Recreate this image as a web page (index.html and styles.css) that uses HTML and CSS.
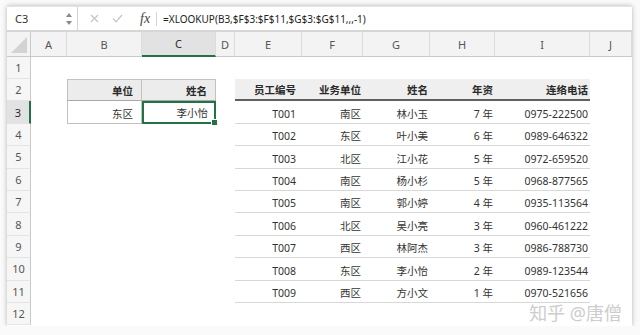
FILE: index.html
```html
<!DOCTYPE html>
<html lang="zh-CN">
<head>
    <meta charset="UTF-8">
    <meta name="viewport" content="width=device-width, initial-scale=1.0">
    <title>XLOOKUP</title>
    <link rel="stylesheet" href="styles.css">
</head>
<body>

    <div class="window">
        <!-- Formula bar -->
        <div class="formula-bar">
            <div class="name-box">
                <span>C3</span>
                <svg class="spinner" width="6" height="14" viewBox="0 0 6 14">
                    <polygon points="3,1 6,5 0,5" fill="#8a8a8a"/>
                    <polygon points="0,9 6,9 3,13" fill="#8a8a8a"/>
                </svg>
            </div>
            <svg class="icon-cancel" width="9" height="9" viewBox="0 0 9 9">
                <path d="M1 1 L8 8 M8 1 L1 8" stroke="#c4c4c4" stroke-width="1.2" fill="none"/>
            </svg>
            <svg class="icon-enter" width="11" height="9" viewBox="0 0 11 9">
                <path d="M1 4.5 L4 7.8 L10 1" stroke="#c4c4c4" stroke-width="1.2" fill="none"/>
            </svg>
            <span class="fx">fx</span>
            <span class="bar-sep"></span>
            <div class="formula">=XLOOKUP(B3,$F$3:$F$11,$G$3:$G$11,,,-1)</div>
        </div>

        <div class="sheet" id="sheet"></div>

        <div class="watermark">知乎 @唐僧</div>
    </div>

    <script>
        const letters = ["A", "B", "C", "D", "E", "F", "G", "H", "I", "J"];

        // lookup table B2:C3
        const lookup = {
            "2,1": "单位", "2,2": "姓名",
            "3,1": "东区", "3,2": "李小怡"
        };

        // staff table E2:I11
        const staffHead = ["员工编号", "业务单位", "姓名", "年资", "连络电话"];
        const staff = [
            ["T001", "南区", "林小玉", "7 年", "0975-222500"],
            ["T002", "东区", "叶小美", "6 年", "0989-646322"],
            ["T003", "北区", "江小花", "5 年", "0972-659520"],
            ["T004", "南区", "杨小杉", "5 年", "0968-877565"],
            ["T005", "南区", "郭小婷", "4 年", "0935-113564"],
            ["T006", "北区", "吴小亮", "3 年", "0960-461222"],
            ["T007", "西区", "林阿杰", "3 年", "0986-788730"],
            ["T008", "东区", "李小怡", "2 年", "0989-123544"],
            ["T009", "西区", "方小文", " 1 年", "0970-521656"]
        ];

        function buildSheet() {
            const sheet = document.getElementById("sheet");

            for (let r = 0; r <= 12; r++) {
                for (let c = 0; c <= 10; c++) {
                    const cell = document.createElement("div");

                    if (r === 0 && c === 0) {
                        cell.className = "corner";
                        cell.innerHTML = '<svg width="16" height="16" viewBox="0 0 16 16"><polygon points="16,0 16,16 0,16" fill="#d3d3d3"/></svg>';
                    } else if (r === 0) {
                        cell.className = "col-head" + (c === 3 ? " active" : "");
                        cell.textContent = letters[c - 1];
                    } else if (c === 0) {
                        cell.className = "row-head" + (r === 3 ? " active" : "");
                        cell.textContent = r;
                    } else if (lookup[r + "," + (c - 1)] !== undefined) {
                        cell.className = "lk " + (r === 2 ? "lk-head" : "lk-cell");
                        if (r === 3 && c === 3) cell.classList.add("selected");
                        cell.innerHTML = "<span>" + lookup[r + "," + (c - 1)] + "</span>";
                    } else if (r >= 2 && r <= 11 && c >= 5 && c <= 9) {
                        const text = r === 2 ? staffHead[c - 5] : staff[r - 3][c - 5];
                        cell.className = "st st-" + letters[c - 1].toLowerCase() + (r === 2 ? " st-head" : " st-cell");
                        cell.innerHTML = "<span>" + text + "</span>";
                    } else {
                        cell.className = "cell";
                    }

                    sheet.appendChild(cell);
                }
            }
        }

        buildSheet();
    </script>

</body>
</html>
```

FILE: styles.css
```css
body {
    margin: 0;
    background-color: #fafafa;
    font-family: "Noto Sans", "Noto Sans CJK SC", sans-serif;
    color: #333;
}

.window {
    position: relative;
    width: 625px;
    height: 320px;
    margin: 6px 0 0 7px;
    background-color: #fff;
    box-shadow: 0 0 5px rgba(0, 0, 0, 0.28);
    overflow: hidden;
}

/* formula bar */
.formula-bar {
    display: flex;
    align-items: center;
    height: 23px;
    border-top: 1px solid #e3e3e3;
    border-bottom: 2px solid #d6d6d6;
    background-color: #fff;
}

.name-box {
    display: flex;
    align-items: center;
    justify-content: space-between;
    box-sizing: border-box;
    width: 71px;
    height: 100%;
    padding: 0 5px 0 8px;
    border-right: 1px solid #d4d4d4;
    font-size: 11px;
    color: #333;
}

.icon-cancel {
    margin-left: 12px;
}

.icon-enter {
    margin-left: 13px;
}

.fx {
    margin-left: 17px;
    font-family: "Liberation Serif", serif;
    font-style: italic;
    font-size: 14px;
    color: #444;
}

.bar-sep {
    width: 1px;
    height: 14px;
    margin-left: 6px;
    background-color: #d4d4d4;
}

.formula {
    margin-left: 6px;
    font-size: 10px;
    color: #222;
}

/* sheet grid */
.sheet {
    display: grid;
    grid-template-columns: 24px 36px 75px 74px 19px 67px 61px 67px 65px 95px 42px;
    grid-template-rows: 25px 22px repeat(11, 22.4px);
    font-size: 10.5px;
}

.sheet > div {
    box-sizing: border-box;
}

.corner {
    display: flex;
    align-items: flex-end;
    justify-content: flex-end;
    padding: 0 3px 3px 0;
    background-color: #f3f3f3;
    border-right: 1px solid #c9c9c9;
    border-bottom: 1px solid #c9c9c9;
}

.col-head {
    display: flex;
    align-items: center;
    justify-content: center;
    background-color: #f3f3f3;
    border-right: 1px solid #dcdcdc;
    border-bottom: 1px solid #c9c9c9;
    font-size: 11px;
    color: #555;
}

.col-head.active {
    background-color: #e2e2e2;
    border-bottom: 2px solid #217346;
    color: #2a2a2a;
}

.row-head {
    display: flex;
    align-items: center;
    justify-content: center;
    background-color: #f6f6f6;
    border-right: 1px solid #c9c9c9;
    border-bottom: 1px solid #e4e4e4;
    font-size: 11px;
    color: #555;
}

.row-head.active {
    background-color: #e2e2e2;
    border-right: 2px solid #217346;
    color: #2a2a2a;
}

/* lookup table */
.lk {
    display: flex;
    align-items: flex-end;
    justify-content: flex-end;
    padding: 0 8px 2px 0;
    border-right: 1px solid #c2c2c2;
    border-bottom: 1px solid #c2c2c2;
}

.lk:nth-child(11n + 3) {
    border-left: 1px solid #c2c2c2;
}

.lk-head {
    background-color: #ececec;
    border-top: 1px solid #c2c2c2;
    border-bottom-color: #a9a9a9;
    color: #2a2a2a;
    font-weight: 600;
}

.lk-cell {
    color: #333;
}

.selected {
    position: relative;
    border: 2px solid #217346;
    padding-right: 6px;
}

.selected::after {
    content: "";
    position: absolute;
    right: -4px;
    bottom: -4px;
    width: 5px;
    height: 5px;
    background-color: #217346;
    border: 1px solid #fff;
}

/* staff table */
.st {
    display: flex;
    align-items: flex-end;
    justify-content: flex-end;
    padding: 0 2px 2px 0;
    border-bottom: 1px solid #d8d8d8;
    white-space: pre;
}

.st-e {
    padding-right: 6px;
}

.st-head {
    background-color: #efefef;
    border-bottom: 2px solid #5f5f5f;
    color: #2a2a2a;
    font-weight: 600;
}

.st-cell {
    color: #333;
}

.watermark {
    position: absolute;
    right: 10px;
    bottom: 2px;
    font-size: 18px;
    line-height: 22px;
    color: #cdcdcd;
    text-shadow: 0 0 2px #fff, 0 0 2px #fff;
    pointer-events: none;
}
```
